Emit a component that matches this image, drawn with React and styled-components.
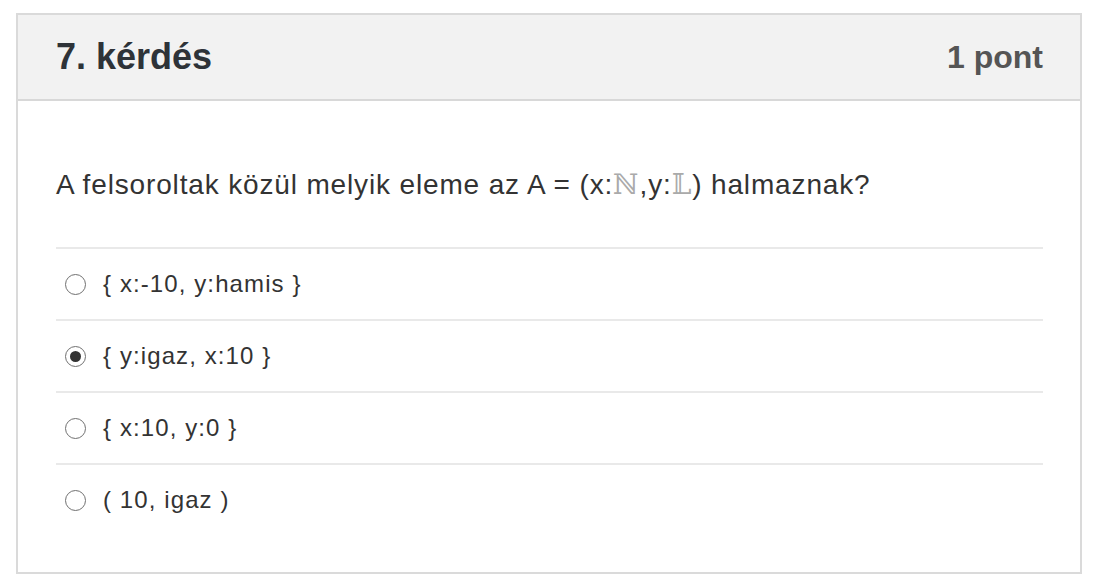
import React from 'react'
import styled, { createGlobalStyle } from 'styled-components'

const GlobalStyle = createGlobalStyle`
  body {
    margin: 0;
    background: #fff;
    font-family: "Liberation Sans", Arial, sans-serif;
  }
`

const Card = styled.div`
  margin: 13px 0 0 16px;
  width: 1066px;
  height: 561px;
  box-sizing: border-box;
  border: 2px solid #dadada;
  background: #fff;
  display: flex;
  flex-direction: column;
`

const Header = styled.div`
  height: 86px;
  box-sizing: border-box;
  background: #f2f2f2;
  border-bottom: 2px solid #d8d8d8;
  display: flex;
  align-items: center;
  justify-content: space-between;
  padding: 0 37px 0 38px;
`

const Title = styled.h2`
  margin: 0;
  font-size: 36px;
  font-weight: bold;
  color: #2e3338;
`

const Points = styled.span`
  font-size: 32px;
  font-weight: bold;
  color: #555;
`

const Body = styled.div`
  padding: 67px 37px 0 38px;
`

const Question = styled.p`
  margin: 0 0 45px;
  font-size: 28px;
  line-height: 34px;
  letter-spacing: 0.85px;
  color: #333;
`

const Sym = styled.span`
  font-family: "DejaVu Serif", serif;
  color: #aaa;
`

const Options = styled.ul`
  list-style: none;
  margin: 0;
  padding: 0;
`

const Option = styled.li`
  height: 72px;
  box-sizing: border-box;
  border-top: 2px solid #e9e9e9;
  display: flex;
  align-items: center;
  padding-left: 9px;
  gap: 17px;
  font-size: 24px;
  letter-spacing: 1.1px;
  color: #333;
`

const Radio = styled.span`
  width: 21px;
  height: 21px;
  box-sizing: border-box;
  border-radius: 50%;
  border: 1.5px solid #707070;
  display: flex;
  align-items: center;
  justify-content: center;
  &::after {
    content: '';
    width: 11px;
    height: 11px;
    border-radius: 50%;
    background: ${p => (p.$checked ? '#333' : 'transparent')};
  }
`

const options = [
  { label: '{ x:-10, y:hamis }' },
  { label: '{ y:igaz, x:10 }', checked: true },
  { label: '{ x:10, y:0 }' },
  { label: '( 10, igaz )' },
]

export default function App() {
  return (
    <>
      <GlobalStyle />
      <Card>
        <Header>
          <Title>7. kérdés</Title>
          <Points>1 pont</Points>
        </Header>
        <Body>
          <Question>
            A felsoroltak közül melyik eleme az A = (x:<Sym>ℕ</Sym>,y:<Sym>𝕃</Sym>) halmaznak?
          </Question>
          <Options>
            {options.map(o => (
              <Option key={o.label}>
                <Radio $checked={o.checked} />
                <span>{o.label}</span>
              </Option>
            ))}
          </Options>
        </Body>
      </Card>
    </>
  )
}
